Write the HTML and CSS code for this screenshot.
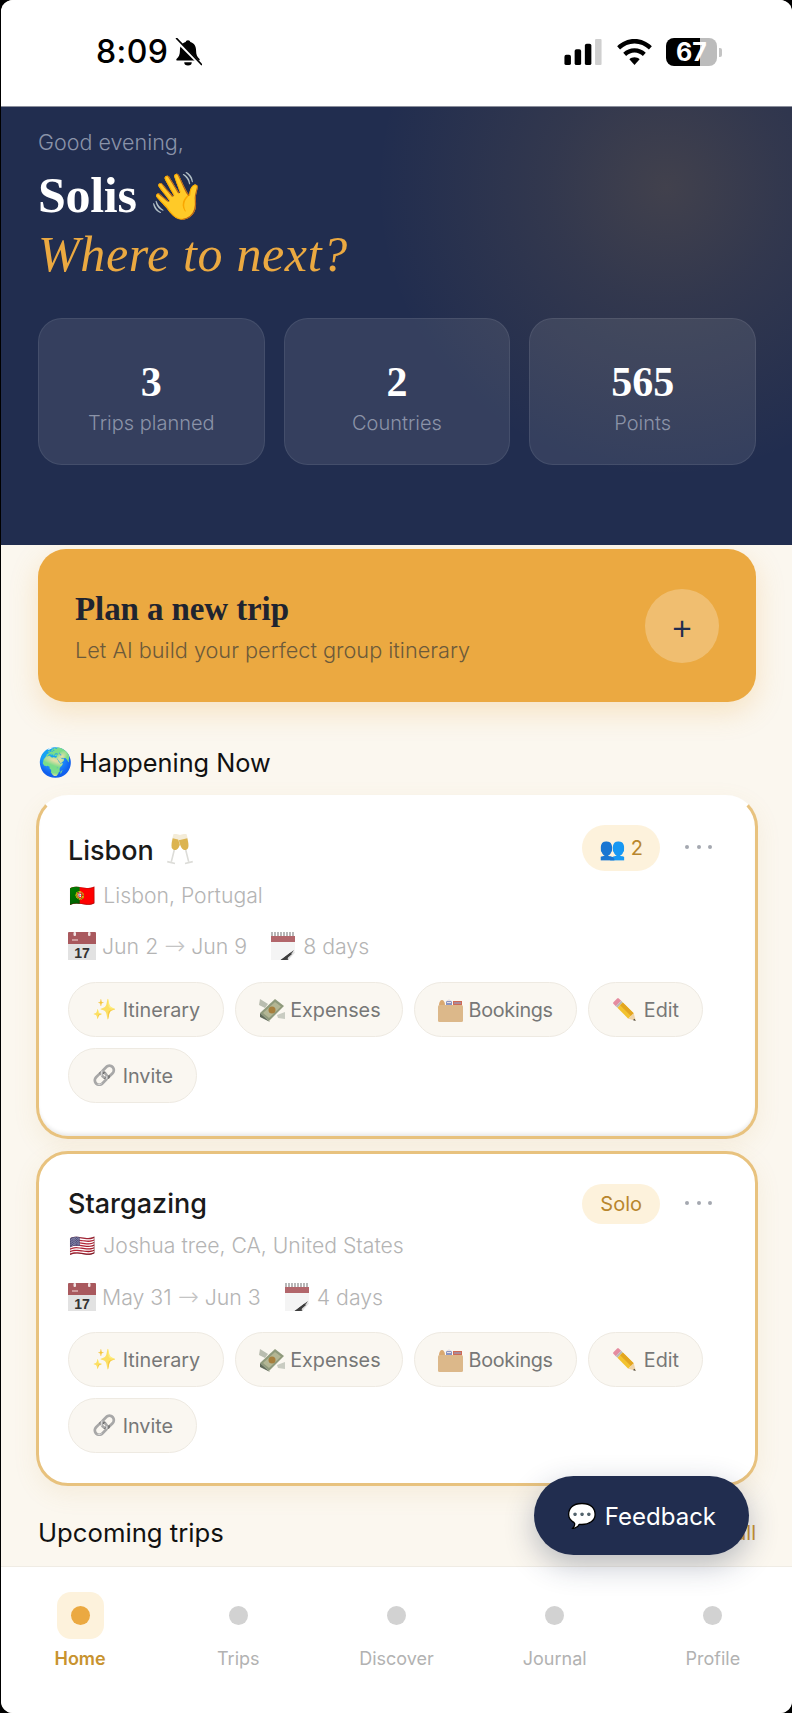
FILE: index.html
```html
<!DOCTYPE html>
<html lang="en">
<head>
<meta charset="utf-8">
<title>Home</title>
<link rel="stylesheet" href="styles.css">
</head>
<body>
<svg class="sprite" aria-hidden="true">
  <symbol id="i-cal" viewBox="0 0 28 28">
    <rect y="12" width="28" height="16" fill="#e2e2e2"/>
    <path d="M1 0h26a1 1 0 0 1 1 1v11H0V1a1 1 0 0 1 1-1z" fill="#a9595e"/>
    <rect x="5.500" y="0" width="2.500" height="4" rx="1" fill="#f1e3e3"/>
    <rect x="20" y="0" width="2.500" height="4" rx="1" fill="#f1e3e3"/>
    <path d="M4 8h6" stroke="#cf9a9c" stroke-width="2"/>
    <text class="cal-num" x="14" y="26" text-anchor="middle">17</text>
  </symbol>
  <symbol id="i-note" viewBox="0 0 26 28">
    <path d="M1 6h24v15l-7 7H1z" fill="#f4f4f4"/>
    <rect x="1" y="4" width="24" height="6" fill="#b2666b"/>
    <path d="M2 0v4M5 0v4M8 0v4M11 0v4M14 0v4M17 0v4M20 0v4M23 0v4" stroke="#9a9a9a" stroke-width="1.400"/>
    <path d="M11 28l13-10-6 10z" fill="#4a4a4a"/>
    <path d="M18 28c-1-3 1-7 7-8z" fill="#dcdcdc"/>
    <path d="M10.500 28l10-7.500 1.500 1.500-7 6z" fill="#3c3c3c"/>
  </symbol>
  <symbol id="i-money" viewBox="0 0 28 24">
    <path d="M2 1l8 5-3 4-6-3z" fill="#b9bdb0"/>
    <path d="M27 14l-8 3 1 3 7 1z" fill="#c9ccc2"/>
    <path d="M17 1l9 7L11 23 2 15z" fill="#8f9a7c"/>
    <path d="M17 4l6 4.500L11 20l-6-5z" fill="#b3b694"/>
    <circle cx="14" cy="12" r="3.500" fill="#a77f3d"/>
    <path d="M2 15l9 8 1 1-10-5z" fill="#5f6a58"/>
  </symbol>
  <symbol id="i-box" viewBox="0 0 25 24">
    <path d="M1 7c0-3 1.500-5 3-5s3 2 3 5z" fill="#d9a871"/>
    <path d="M8 4c2-3 4-3 6 0v3H8z" fill="#8a94c2"/>
    <path d="M9 2.500h4M9 4.500h4" stroke="#e9e2e4" stroke-width="1"/>
    <path d="M15 3h9v4h-9z" fill="#cf6a55"/>
    <path d="M16 5h7" stroke="#8f9fc7" stroke-width="1.200"/>
    <rect y="7" width="25" height="17" rx="1.500" fill="#dcb88a"/>
  </symbol>
  <symbol id="i-pencil" viewBox="0 0 24 24">
    <path d="M4.500 1.500L1.500 4.500c-.6.6-.6 1.400 0 2l2 2 5-5-2-2c-.6-.6-1.400-.6-2 0z" fill="#e58ca0"/>
    <path d="M3.500 8.500l5-5 1.500 1.500-5 5z" fill="#b9b9b9"/>
    <path d="M5 10l5-5 10 10-5 5z" fill="#f2c230"/>
    <path d="M7.500 7.500L10 5l10 10-2.500 2.500z" fill="#e3a520"/>
    <path d="M15 20l5-5 2 7z" fill="#efd3a6"/>
    <path d="M20.500 20l1.500 2-2.500-.6z" fill="#333"/>
  </symbol>
  <symbol id="i-glass" viewBox="0 0 28 31">
    <g transform="rotate(14 8.500 15)">
      <path d="M4 0h9c.5 6 .2 11-1.400 14-.9 1.600-2.300 2-3.100 2s-2.200-.4-3.100-2C3.800 11 3.500 6 4 0z" fill="#f4ecd8"/>
      <path d="M4.200 5h8.600c.1 4-.3 7-1.200 9-.9 1.600-2.300 2-3.100 2s-2.200-.4-3.100-2c-.9-2-1.300-5-1.200-9z" fill="#dcb450"/>
      <path d="M8.500 16v12M4.500 29h8" stroke="#dcdcd8" stroke-width="1.600" fill="none"/>
    </g>
    <g transform="rotate(-14 19.500 15)">
      <path d="M15 0h9c.5 6 .2 11-1.400 14-.9 1.600-2.300 2-3.100 2s-2.200-.4-3.100-2C14.800 11 14.500 6 15 0z" fill="#f4ecd8"/>
      <path d="M15.200 5h8.600c.1 4-.3 7-1.200 9-.9 1.600-2.300 2-3.100 2s-2.200-.4-3.100-2c-.9-2-1.300-5-1.200-9z" fill="#dcb450"/>
      <path d="M19.500 16v12M15.500 29h8" stroke="#dcdcd8" stroke-width="1.600" fill="none"/>
    </g>
  </symbol>
</svg>

<div class="screen">
  <header class="status">
    <div class="status-left">
      <span class="time">8:09</span>
      <svg class="bell" viewBox="0 0 26 26"><path d="M13 2c1.300 0 2 .8 2.200 1.800 3.600 1 5.300 4 5.300 7.700 0 4 1 5.700 3 7.700.8.900.4 1.800-.8 1.800H3.300c-1.200 0-1.600-.9-.8-1.800 2-2 3-3.700 3-7.700 0-3.700 1.700-6.700 5.300-7.700C11 2.800 11.700 2 13 2z"/><path d="M9.500 22.500h7a3.500 3 0 0 1-7 0z"/><path class="bell-gap" d="M1 1l24 24"/><path class="bell-line" d="M2 0l24 25"/></svg>
    </div>
    <div class="status-right">
      <svg class="signal" viewBox="0 0 40 28"><rect x="0" y="17" width="7" height="11" rx="2"/><rect x="11" y="11" width="7" height="17" rx="2"/><rect x="22" y="5" width="7" height="23" rx="2"/><rect class="off" x="33" y="0" width="7" height="28" rx="1"/></svg>
      <svg class="wifi" viewBox="0 0 36 27"><path d="M18 0c7 0 13 2.700 18 7.500l-3 3.500C28.800 7 23.800 4.800 18 4.800S7.200 7 3 11L0 7.500C5 2.700 11 0 18 0z"/><path d="M18 9.500c4.600 0 8.500 1.700 11.700 4.700l-3 3.400C24.200 15.300 21.300 14 18 14s-6.200 1.300-8.700 3.600l-3-3.400C9.500 11.200 13.400 9.500 18 9.500z"/><path d="M18 19c2 0 3.800.7 5.300 2L18 27l-5.300-6c1.500-1.300 3.300-2 5.300-2z"/></svg>
      <div class="battery"><div class="battery-body"><span class="battery-num">67</span></div><i class="battery-cap"></i></div>
    </div>
  </header>

  <section class="hero">
    <p class="greet">Good evening,</p>
    <h1 class="name">Solis <span class="emoji wave">👋</span></h1>
    <h2 class="where">Where to next?</h2>
    <div class="stats">
      <div class="stat"><strong>3</strong><span>Trips planned</span></div>
      <div class="stat"><strong>2</strong><span>Countries</span></div>
      <div class="stat"><strong>565</strong><span>Points</span></div>
    </div>
  </section>

  <main class="content">
    <div class="plan">
      <div>
        <h3 class="plan-title">Plan a new trip</h3>
        <p class="plan-sub">Let AI build your perfect group itinerary</p>
      </div>
      <div class="plan-btn">+</div>
    </div>

    <h4 class="section-title now"><span class="emoji globe">🌍</span>Happening Now</h4>

    <article class="card first">
      <div class="card-top">
        <h5 class="trip-name">Lisbon <svg class="glass"><use href="#i-glass"/></svg></h5>
        <span class="badge group"><span class="emoji people">👥</span>2</span>
        <span class="more"><i></i><i></i><i></i></span>
      </div>
      <p class="loc"><span class="emoji">🇵🇹</span> Lisbon, Portugal</p>
      <div class="dates">
        <svg class="cal"><use href="#i-cal"/></svg><span>Jun 2<span class="arrow">→</span>Jun 9</span>
        <svg class="note"><use href="#i-note"/></svg><span>8 days</span>
      </div>
      <div class="pills">
        <span class="pill"><span class="emoji spark">✨</span>Itinerary</span>
        <span class="pill tight"><svg class="money"><use href="#i-money"/></svg>Expenses</span>
        <span class="pill book"><svg class="box"><use href="#i-box"/></svg>Bookings</span>
        <span class="pill"><svg class="pencil"><use href="#i-pencil"/></svg>Edit</span>
        <span class="pill"><span class="emoji chain">🔗</span>Invite</span>
      </div>
    </article>

    <article class="card second">
      <div class="card-top">
        <h5 class="trip-name">Stargazing</h5>
        <span class="badge">Solo</span>
        <span class="more"><i></i><i></i><i></i></span>
      </div>
      <p class="loc"><span class="emoji">🇺🇸</span> Joshua tree, CA, United States</p>
      <div class="dates">
        <svg class="cal"><use href="#i-cal"/></svg><span>May 31<span class="arrow">→</span>Jun 3</span>
        <svg class="note"><use href="#i-note"/></svg><span>4 days</span>
      </div>
      <div class="pills">
        <span class="pill"><span class="emoji spark">✨</span>Itinerary</span>
        <span class="pill tight"><svg class="money"><use href="#i-money"/></svg>Expenses</span>
        <span class="pill book"><svg class="box"><use href="#i-box"/></svg>Bookings</span>
        <span class="pill"><svg class="pencil"><use href="#i-pencil"/></svg>Edit</span>
        <span class="pill"><span class="emoji chain">🔗</span>Invite</span>
      </div>
    </article>

    <div class="upcoming">
      <h4 class="section-title">Upcoming trips</h4>
      <span class="see-all">See all</span>
    </div>
  </main>

  <button class="feedback"><span class="emoji">💬</span><span class="feedback-label">Feedback</span></button>

  <nav class="nav">
    <div class="nav-item active"><div class="nav-icon"><i></i></div><span>Home</span></div>
    <div class="nav-item"><div class="nav-icon"><i></i></div><span>Trips</span></div>
    <div class="nav-item"><div class="nav-icon"><i></i></div><span>Discover</span></div>
    <div class="nav-item"><div class="nav-icon"><i></i></div><span>Journal</span></div>
    <div class="nav-item"><div class="nav-icon"><i></i></div><span>Profile</span></div>
  </nav>
</div>
</body>
</html>
```

FILE: styles.css
```css
* { box-sizing: border-box; }
html, body { margin: 0; padding: 0; background: #000; }
body { width: 792px; height: 1713px; overflow: hidden; font-family: "Inter", "Noto Sans", sans-serif; }
h1, h2, h3, h4, h5, p { margin: 0; font-weight: inherit; }
.sprite { display: none; }
.cal-num { font-family: "Liberation Sans", sans-serif; font-size: 14px; font-weight: 700; fill: #333; }

.screen {
  position: relative;
  display: flex;
  flex-direction: column;
  width: 791px;
  height: 1713px;
  margin-left: 1px;
  overflow: hidden;
  border-radius: 12px;
  background: #fbf7ef;
}

.status {
  flex: none;
  height: 107px;
  padding: 36px 70px 0 95px;
  display: flex;
  justify-content: space-between;
  align-items: flex-start;
  background: #fff;
  border-bottom: 1px solid #8b8f9c;
}
.status-left { display: flex; align-items: center; gap: 6px; }
.time { font-size: 32px; line-height: 32px; font-weight: 500; color: #000; letter-spacing: .4px; }
.bell { width: 28px; height: 28px; fill: #000; }
.bell-line { stroke: #000; stroke-width: 1.6; fill: none; }
.bell-gap { stroke: #fff; stroke-width: 3; fill: none; }
.status-right { display: flex; align-items: center; gap: 14px; padding-top: 2px; }
.signal { width: 40px; height: 26px; fill: #000; }
.signal .off { fill: #cfcfcf; }
.wifi { width: 35px; height: 26px; fill: #000; }
.battery { display: flex; align-items: center; gap: 2px; }
.battery-body {
  width: 51px; height: 28px; border-radius: 8px;
  background: linear-gradient(90deg, #000 0 66%, #bcbcbc 66%);
  display: flex; align-items: center; justify-content: center;
}
.battery-num { color: #fff; font-size: 25px; font-weight: 700; line-height: 1; }
.battery-cap { display: block; width: 3px; height: 9px; border-radius: 0 2px 2px 0; background: #c4c4c4; }

.hero {
  flex: none;
  height: 438px;
  padding: 22px 36px 0 37px;
  background:
    radial-gradient(circle 290px at 665px 80px, rgba(235, 169, 65, .16), rgba(235, 169, 65, .085) 40%, rgba(235, 169, 65, 0)),
    #212d4f;
}
.greet { font-size: 21.5px; line-height: 26px; color: #8a93a9; font-weight: 300; }
.name { margin-top: 11px; font-family: "Liberation Serif", serif; font-weight: 700; font-size: 50px; line-height: 58px; color: #fff; letter-spacing: -.3px; }
.wave { font-size: 46px; }
.where { font-family: "Liberation Serif", serif; font-style: italic; font-size: 50px; line-height: 58px; color: #eba941; letter-spacing: .65px; }
.stats { margin-top: 35px; display: grid; grid-template-columns: repeat(3, 1fr); gap: 19px; }
.stat {
  height: 147px;
  padding-top: 41px;
  display: flex; flex-direction: column; align-items: center;
  border-radius: 24px;
  background: rgba(255, 255, 255, .09);
  border: 1px solid rgba(255, 255, 255, .08);
}
.stat strong { font-family: "Liberation Serif", serif; font-size: 42px; line-height: 44px; color: #fff; font-weight: 700; }
.stat span { margin-top: 7px; font-size: 20px; line-height: 24px; color: #8b93a8; font-weight: 300; }

.content { flex: 1; min-height: 0; overflow: hidden; padding: 4px 36px 0 37px; }
.plan {
  height: 153px;
  padding: 0 37px;
  display: flex; align-items: center; justify-content: space-between;
  border-radius: 28px;
  background: #eba941;
  box-shadow: 0 10px 28px rgba(235, 169, 65, .25);
}
.plan-title { margin-top: 2px; font-family: "Liberation Serif", serif; font-weight: 700; font-size: 33px; line-height: 40px; color: #1f2430; letter-spacing: -.1px; }
.plan-sub { margin-top: 7px; font-size: 21.7px; line-height: 28px; color: #6d5a3a; font-weight: 300; }
.plan-btn {
  width: 74px; height: 74px; border-radius: 50%;
  background: rgba(255, 255, 255, .25);
  display: flex; align-items: center; justify-content: center;
  font-size: 36px; font-weight: 300; color: #212d4f;
}

.section-title { font-size: 25.3px; line-height: 32px; font-weight: 400; color: #111; }
.now { margin-top: 45px; display: flex; align-items: center; gap: 6px; }
.globe { font-size: 28px; }
.emoji { font-family: "Noto Color Emoji", "Apple Color Emoji", sans-serif; }
.spark { opacity: .75; }
.chain { filter: grayscale(1); }
.people { font-size: 21.5px; }

.card {
  margin-left: -2px; margin-right: -2px;
  padding: 27px 30px 0 29px;
  background: #fff;
  border: 3px solid #e8c27e;
  border-radius: 32px;
}
.first { margin-top: 16px; height: 344px; border-top-color: transparent; box-shadow: inset 0 -4px 4px -2px #e6e6e6, 0 8px 24px rgba(200, 150, 60, .1); }
.second { margin-top: 12px; height: 335px; box-shadow: 0 8px 24px rgba(200, 150, 60, .1); }
.card-top { display: flex; align-items: center; height: 46px; }
.trip-name { flex: 1; display: flex; align-items: center; gap: 12px; font-size: 27px; line-height: 36px; font-weight: 500; color: #1a1a1a; }
.first .trip-name { padding-top: 6px; }
.glass { width: 28px; height: 31px; margin-top: -4px; }
.badge { height: 40px; padding: 0 18px; display: flex; align-items: center; gap: 5px; border-radius: 23px; background: #fdf2dc; color: #b8862d; font-size: 20px; }
.group { height: 46px; padding: 0 17px; }
.more { width: 27px; margin: -2px 13px 0 25px; display: flex; justify-content: space-between; }
.more i { display: block; width: 4px; height: 4px; border-radius: 50%; background: #a4a8b0; }
.loc { margin-top: 3px; font-size: 21.2px; line-height: 30px; color: #b4b4b4; font-weight: 300; }
.loc .emoji { margin: 0 2px 0 1px; }
.dates { margin-top: 20px; display: flex; align-items: center; height: 32px; font-size: 21.3px; color: #b4b4b4; font-weight: 300; }
.arrow { display: inline-block; width: 33px; text-align: center; font-family: "DejaVu Sans", sans-serif; font-size: 25px; line-height: 20px; color: #c4c4c4; }
.cal { width: 28px; height: 28px; margin-right: 6px; }
.note { width: 26px; height: 28px; margin: 0 7px 0 23px; }
.pills { margin-top: 19px; display: flex; flex-wrap: wrap; gap: 11px; }
.first .loc { margin-top: 9px; }
.first .dates { margin-top: 19px; }
.first .pills { margin-top: 20px; }
.pill {
  height: 55px; padding: 0 23px;
  display: inline-flex; align-items: center; gap: 6px;
  border-radius: 28px;
  background: #faf7f1;
  border: 1px solid #eeeae2;
  color: #777;
  font-size: 19.8px;
}
.tight { gap: 4px; padding: 0 21px 0 22px; }
.book { letter-spacing: -.3px; }
.money { width: 28px; height: 24px; }
.box { width: 25px; height: 24px; }
.pencil { width: 26px; height: 26px; }
.upcoming { margin-top: 31px; display: flex; justify-content: space-between; align-items: center; }
.upcoming .section-title { font-size: 25.7px; }
.see-all { color: #c8932f; font-size: 20px; }

.feedback {
  position: absolute; left: 533px; top: 1476px;
  width: 215px; height: 79px;
  display: flex; align-items: center; justify-content: center; gap: 8px;
  border: 0; border-radius: 40px;
  background: #212d4f;
  color: #fff;
  font-family: inherit; font-size: 24px;
  box-shadow: 0 10px 30px rgba(33, 45, 79, .3);
}
.feedback-label { padding-top: 2px; }

.nav {
  flex: none;
  height: 147px;
  padding-top: 25px;
  display: grid; grid-template-columns: repeat(5, 1fr);
  background: #fff;
  border-top: 1px solid #f0ece4;
}
.nav-item { display: flex; flex-direction: column; align-items: center; }
.nav-icon { width: 47px; height: 47px; border-radius: 14px; display: flex; align-items: center; justify-content: center; }
.nav-icon i { display: block; width: 19px; height: 19px; border-radius: 50%; background: #d2d2d2; }
.nav-item span { margin-top: 8px; font-size: 18px; line-height: 24px; color: #b2b2b2; font-weight: 400; }
.active .nav-icon { background: #fdf2dc; }
.active .nav-icon i { background: #eba941; }
.active span { color: #c8932f; font-weight: 600; }
```
